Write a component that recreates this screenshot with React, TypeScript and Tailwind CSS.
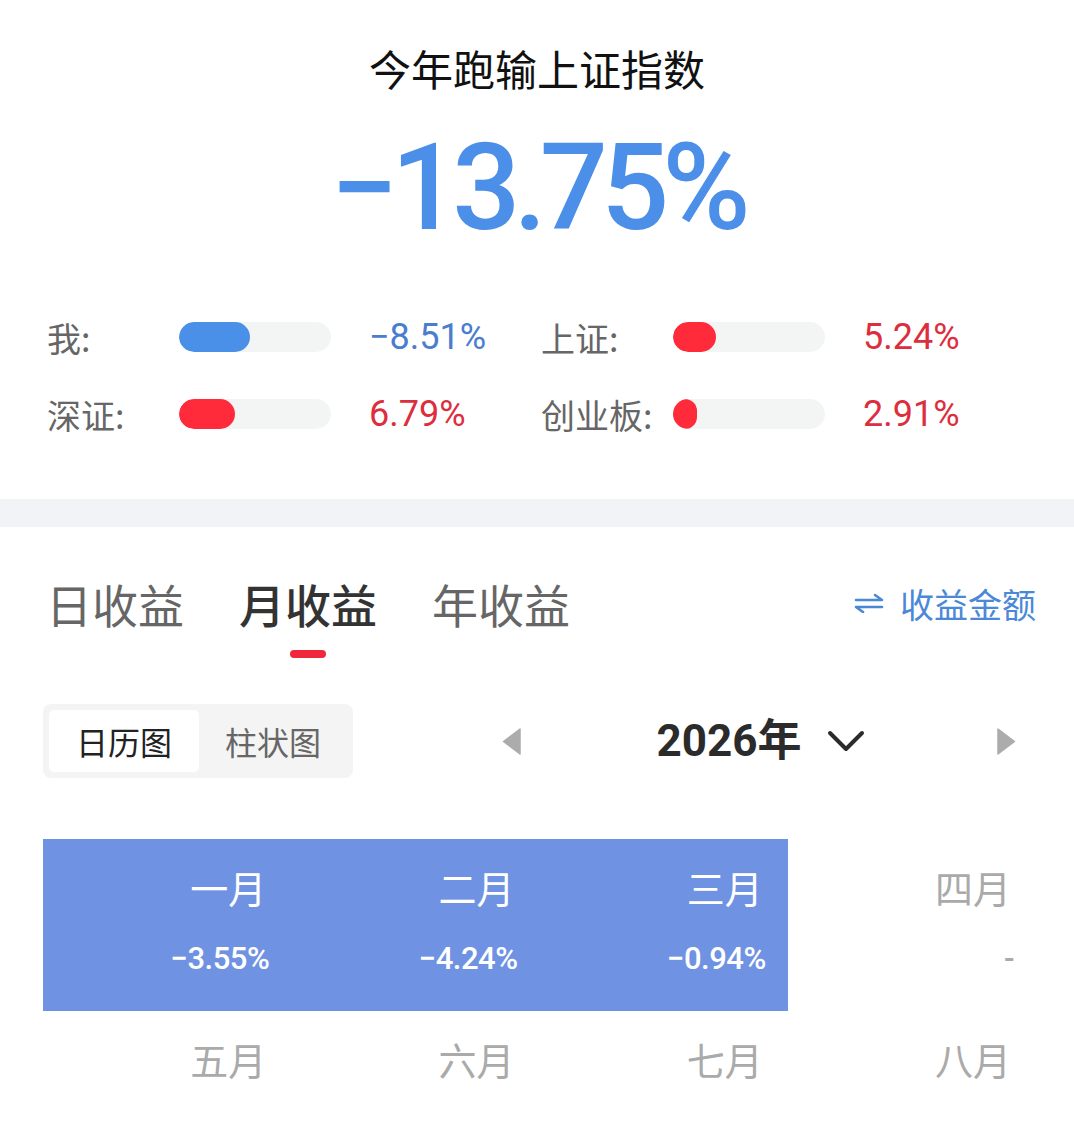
import React from 'react';

const stats = [
  { label: '我:', fill: 71, value: '−8.51%', up: false },
  { label: '上证:', fill: 43, value: '5.24%', up: true },
  { label: '深证:', fill: 56, value: '6.79%', up: true },
  { label: '创业板:', fill: 24, value: '2.91%', up: true },
];

const months = [
  { name: '一月', value: '−3.55%', on: true },
  { name: '二月', value: '−4.24%', on: true },
  { name: '三月', value: '−0.94%', on: true },
  { name: '四月', value: '-', on: false },
  { name: '五月', value: '', on: false },
  { name: '六月', value: '', on: false },
  { name: '七月', value: '', on: false },
  { name: '八月', value: '', on: false },
];

function SwapIcon() {
  return (
    <svg width="30" height="20" viewBox="0 0 30 20" fill="none" stroke="#4a88d8" strokeWidth="2.6" strokeLinecap="round" strokeLinejoin="round">
      <path d="M2 7h26l-7-5" />
      <path d="M28 14H2l7 5" />
    </svg>
  );
}

function Triangle({ dir }: { dir: 'left' | 'right' }) {
  return (
    <svg width="19" height="27" viewBox="0 0 19 27">
      {dir === 'left' ? (
        <path d="M18 1L1.5 13.5L18 26Z" fill="#acacac" stroke="#acacac" strokeWidth="1.5" strokeLinejoin="round" />
      ) : (
        <path d="M1 1L17.5 13.5L1 26Z" fill="#acacac" stroke="#acacac" strokeWidth="1.5" strokeLinejoin="round" />
      )}
    </svg>
  );
}

export default function App() {
  return (
    <div className="w-[1074px] h-[1123px] overflow-hidden bg-white font-['Roboto','Noto_Sans_CJK_SC',sans-serif]">
      {/* header */}
      <div className="pt-[42px] flex flex-col items-center">
        <h1 className="text-[42px] leading-[52px] text-[#111] font-['Noto_Sans_CJK_SC',sans-serif]">今年跑输上证指数</h1>
        <div className="mt-[34px] text-[120px] leading-[120px] font-medium text-[#4b8fe8] tracking-[-7px]">−13.75%</div>
      </div>

      {/* compare bars */}
      <div className="mt-[62px] pl-[47px] grid grid-cols-[494px_494px] gap-y-[37px]">
        {stats.map((s) => (
          <div key={s.label} className="grid grid-cols-[132px_152px_38px_auto] items-center h-[40px]">
            <span className="text-[34px] text-[#666] font-['Noto_Sans_CJK_SC',sans-serif]">{s.label}</span>
            <div className="h-[30px] rounded-full bg-[#f3f5f5] overflow-hidden">
              <div className={`h-full rounded-full ${s.up ? 'bg-[#ff2a3a]' : 'bg-[#4a90e8]'}`} style={{ width: s.fill }} />
            </div>
            <span />
            <span className={`text-[36px] ${s.up ? 'text-[#dc2e3e] text-right w-[96px]' : 'text-[#4a7ccf]'}`}>{s.value}</span>
          </div>
        ))}
      </div>

      <div className="mt-[72px] h-[28px] bg-[#f2f3f7]" />

      {/* tabs */}
      <div className="mt-[50px] pl-[46px] pr-[38px] flex items-start justify-between">
        <div className="flex gap-[55px] font-['Noto_Sans_CJK_SC',sans-serif]">
          <span className="text-[46px] leading-[52px] text-[#666]">日收益</span>
          <div className="flex flex-col items-center">
            <span className="text-[46px] leading-[52px] text-[#333] font-medium">月收益</span>
            <span className="mt-[21px] w-[36px] h-[8px] rounded-full bg-[#f0283c]" />
          </div>
          <span className="text-[46px] leading-[52px] text-[#666]">年收益</span>
        </div>
        <div className="flex items-center gap-[16px] h-[52px]">
          <SwapIcon />
          <span className="text-[34px] text-[#4a88d8] font-['Noto_Sans_CJK_SC',sans-serif]">收益金额</span>
        </div>
      </div>

      {/* view switch + year */}
      <div className="mt-[46px] pl-[43px] pr-[58px] flex items-center">
        <div className="flex p-[6px] bg-[#f4f4f4] rounded-[8px] font-['Noto_Sans_CJK_SC',sans-serif]">
          <div className="w-[150px] h-[62px] bg-white rounded-[5px] flex items-center justify-center text-[32px] text-[#222]">日历图</div>
          <div className="w-[148px] h-[62px] flex items-center justify-center text-[32px] text-[#666]">柱状图</div>
        </div>
        <div className="flex-1 ml-[149px] flex items-center justify-between">
          <Triangle dir="left" />
          <div className="flex items-center gap-[26px] ml-[4px]">
            <span className="text-[44px] font-bold text-[#2b2b2b]">2026年</span>
            <svg width="38" height="22" viewBox="0 0 38 22" fill="none" stroke="#2b2b2b" strokeWidth="4" strokeLinecap="round" strokeLinejoin="round">
              <path d="M3 3l16 16L35 3" />
            </svg>
          </div>
          <Triangle dir="right" />
        </div>
      </div>

      {/* months */}
      <div className="mt-[61px] ml-[43px] w-[993px] grid grid-cols-4">
        {months.map((m) => (
          <div key={m.name} className={`h-[172px] pr-[25px] flex flex-col items-end ${m.on ? 'bg-[#6f93e2]' : ''}`}>
            <span className={`mt-[25px] text-[38px] leading-[46px] font-['Noto_Sans_CJK_SC',sans-serif] ${m.on ? 'text-white' : 'text-[#aaa]'}`}>{m.name}</span>
            {m.value && (
              <span className={`mt-[31px] -mr-[3px] text-[31px] leading-[36px] font-medium tracking-[-0.5px] ${m.on ? 'text-white' : 'text-[#aaa]'}`}>{m.value}</span>
            )}
          </div>
        ))}
      </div>
    </div>
  );
}
